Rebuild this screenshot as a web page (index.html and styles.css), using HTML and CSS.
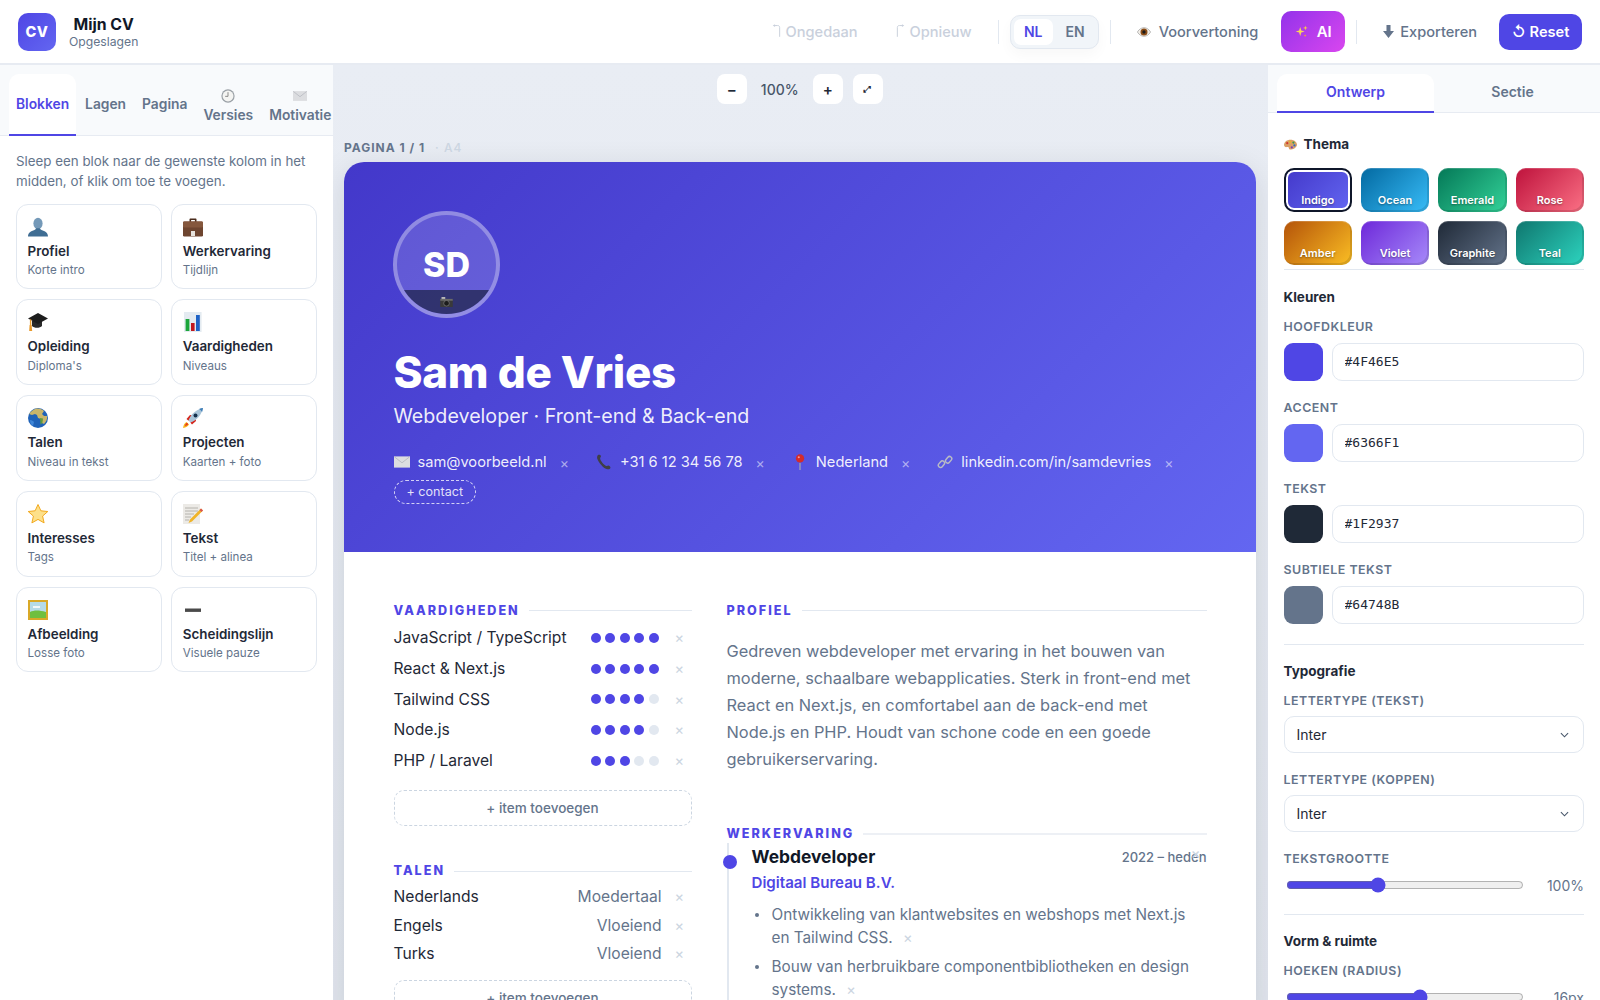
FILE: index.html
```html
<!DOCTYPE html>
<html lang="nl">

<head>
    <meta charset="UTF-8">
    <title>Mijn CV</title>
    <link rel="stylesheet" href="styles.css">
</head>

<body>
    <svg class="sprite" aria-hidden="true">
        <symbol id="i-person" viewBox="0 0 20 20">
            <ellipse cx="10" cy="6.5" rx="4.6" ry="5.8" fill="#7499b8" />
            <path d="M0 19.5c0-4 3-5.4 6.5-6.6 1-.4 1.4-1 1.4-1.6h4.2c0 .6.4 1.2 1.4 1.6 3.5 1.2 6.5 2.6 6.5 6.6z" fill="#3f6d93" />
        </symbol>
        <symbol id="i-case" viewBox="0 0 20 20">
            <path d="M6.5 5V2.4c0-.6.4-1 1-1h5c.6 0 1 .4 1 1V5h-1.6V3h-3.8v2z" fill="#4a2c1c" />
            <rect x="0" y="4.6" width="20" height="15" rx="1.4" fill="#6e4530" />
            <rect x="0" y="4.6" width="20" height="6" rx="1.4" fill="#85573d" />
            <rect x="8" y="14" width="4" height="5" fill="#e8e4de" />
        </symbol>
        <symbol id="i-cap" viewBox="0 0 20 20">
            <path d="M4 9v5c2 2.4 8 2.4 10 0V9z" fill="#2a2a2a" />
            <path d="M10 1 20 6.5 10 12 0 6.5z" fill="#1d1d1d" />
            <path d="M2.6 7.4v6" stroke="#e89a2c" stroke-width="1.4" />
            <path d="M1.6 13h2l.6 6H1.2z" fill="#e89a2c" />
        </symbol>
        <symbol id="i-chart" viewBox="0 0 20 20">
            <rect x="1" y="0" width="17.6" height="20" fill="#e4ebf1" />
            <rect x="2.6" y="7" width="3.8" height="12" fill="#1ca63b" />
            <rect x="8" y="11" width="3.6" height="8" fill="#c2181f" />
            <rect x="13" y="3" width="3.8" height="16" fill="#1e62c6" />
        </symbol>
        <symbol id="i-globe" viewBox="0 0 20 20">
            <circle cx="10" cy="10" r="10" fill="#1f62b8" />
            <path d="M7 1c3-1 7 0 9 2l-2 3 2 2 3 0c.6 3-1 6-3 8l-2-1-1-4-3-1-1-3-2-1-3 1-3-1C2.500 4 4.500 2 7 1z" fill="#c9b56a" />
            <path d="M12 10l3 .6-.6 4.500-1.900 1.400z" fill="#5d9b3d" />
            <path d="M2 12c2 0 3 1 4 2l-1 4c-2-1-3-3-3-6z" fill="#3f86d8" />
        </symbol>
        <symbol id="i-rocket" viewBox="0 0 20 20">
            <path d="M0 20c.5-3 1.500-5 3.500-6l2.500 2.500C5 18.500 3 19.500 0 20z" fill="#f6b21c" />
            <path d="M2 18c.3-1.600 1-2.700 2-3.200l1.200 1.200C4.700 17 3.600 17.700 2 18z" fill="#e8371f" />
            <path d="M3.500 11 7 7l2 .2-3.500 5.500zM9 16.500 13 13l-.2-2-5.500 3.500z" fill="#d4261c" />
            <path d="M5.500 12.500C8 6 13 1.500 20 0c-1.500 7-6 12-12.500 14.500z" fill="#a9c4d8" />
            <path d="M16 .9c1 .5 2.500 2 3.100 3.100.4-1.300.7-2.600.9-4-1.400.2-2.700.5-4 .9z" fill="#3f7fb8" />
            <circle cx="12.500" cy="7.500" r="2" fill="#14304d" />
        </symbol>
        <symbol id="i-star" viewBox="0 0 20 20">
            <path d="M10 .5l2.900 6.300 6.900.7-5.200 4.600 1.500 6.800-6.100-3.500-6.100 3.500 1.500-6.800L.2 7.500l6.900-.7z" fill="#fde08a" stroke="#f2a91e" stroke-width="1" stroke-linejoin="round" />
        </symbol>
        <symbol id="i-note" viewBox="0 0 20 20">
            <rect x="0" y="0" width="17" height="20" fill="#eceae6" />
            <path d="M2 4h13M2 7h13M2 10h9M2 13h6M2 16h4" stroke="#a8a6a0" stroke-width=".8" />
            <path d="M18 4.500l2 2L9 17.500l-3.500 1.500L7 15.500z" fill="#f0b429" />
            <path d="M18 4.500l2 2-1.500 1.500-2-2z" fill="#d9534f" />
        </symbol>
        <symbol id="i-frame" viewBox="0 0 20 20">
            <rect x="0" y="0" width="20" height="20" fill="#d9a928" />
            <rect x="2" y="2" width="16" height="16" fill="#b5dbe8" />
            <path d="M2 12c4-2 9-2 16 0v6H2z" fill="#6fbf3f" />
            <path d="M5 6h7v2H5z" fill="#f3f7f8" />
        </symbol>
        <symbol id="i-minus" viewBox="0 0 20 20">
            <rect x="2" y="8.500" width="16" height="3.400" fill="#4a4a4a" />
        </symbol>
        <symbol id="i-clock" viewBox="0 0 20 20">
            <circle cx="10" cy="10" r="9.500" fill="#9aa0a6" />
            <circle cx="10" cy="10" r="7.800" fill="#f4f4f2" />
            <path d="M10 4.500V10.500H6" fill="none" stroke="#777" stroke-width="1.200" />
        </symbol>
        <symbol id="i-mail" viewBox="0 0 20 16">
            <rect x="0" y="1" width="20" height="14" fill="#dcdde0" />
            <path d="M.5 1.500 10 9l9.500-7.500" fill="none" stroke="#b9bbc2" stroke-width="1.200" />
        </symbol>
        <symbol id="i-phone" viewBox="0 0 20 20">
            <path d="M3 1c1.500-.6 3 .5 3.200 1.500.2 1.200-1.300 2-1 3.500.5 2.800 5 8 7.500 9 1.300.5 2.300-.8 3.500-.4 1 .3 2.300 1.700 1.800 3-.5 1.200-2.300 1.900-3.800 1.400C9.500 18.500 3 10 1.500 5.500 1 3.800 1.800 1.600 3 1z" fill="#3f3f46" />
        </symbol>
        <symbol id="i-pin" viewBox="0 0 20 20">
            <path d="M10 11v9" stroke="#a8a8a8" stroke-width="1.500" />
            <circle cx="10" cy="5.500" r="5.200" fill="#d42b2b" />
            <circle cx="8.500" cy="4" r="1.300" fill="#f19a9a" />
        </symbol>
        <symbol id="i-link" viewBox="0 0 20 20">
            <g fill="none" stroke="#b9bcc4" stroke-width="1.800">
                <rect x="1" y="10" width="9" height="5.500" rx="2.700" transform="rotate(-50 5.500 12.700)" />
                <rect x="10" y="4.500" width="9" height="5.500" rx="2.700" transform="rotate(-50 14.500 7.200)" />
            </g>
        </symbol>
        <symbol id="i-eye" viewBox="0 0 20 14">
            <path d="M.5 7C3.500 2.500 6.500.8 10 .8s6.500 1.700 9.500 6.200c-3 4.500-6 6.200-9.500 6.200S3.500 11.500.5 7z" fill="#f2eee8" stroke="#8c8c8c" stroke-width=".8" />
            <circle cx="10" cy="7" r="5" fill="#8a4c16" />
            <circle cx="10" cy="7" r="2.400" fill="#1a1a1a" />
        </symbol>
        <symbol id="i-spark" viewBox="0 0 20 20">
            <path d="M8 3l1.700 5.300L15 10l-5.300 1.700L8 17l-1.700-5.300L1 10l5.300-1.700z" fill="#f8d65a" />
            <path d="M16 1l.9 2.600 2.600.9-2.600.9-.9 2.600-.9-2.600-2.600-.9 2.600-.9z" fill="#f8c84a" />
            <path d="M15.500 14l.6 1.900 1.900.6-1.900.6-.6 1.900-.6-1.900-1.900-.6 1.900-.6z" fill="#f59e3a" />
        </symbol>
        <symbol id="i-palette" viewBox="0 0 20 20">
            <path d="M10 2.500C4.500 2.500 0 6 0 10.500c0 3 2.500 4 4.500 3.400 1.800-.5 3 .2 3 1.800 0 1.600 1.500 2.300 3.500 2 5-.7 9-3.700 9-7.700 0-4-4.500-7.500-10-7.500z" fill="#d9a066" />
            <circle cx="5" cy="8" r="1.700" fill="#d0342c" />
            <circle cx="9.500" cy="5.800" r="1.700" fill="#e8b923" />
            <circle cx="14.500" cy="7" r="1.700" fill="#3a9a4b" />
            <circle cx="16" cy="11.500" r="1.700" fill="#2f6fc4" />
            <circle cx="12" cy="14.500" r="1.700" fill="#7a3fb0" />
        </symbol>
        <symbol id="i-camera" viewBox="0 0 20 16">
            <rect x="0" y="3" width="20" height="13" rx="1" fill="#3a3a3a" />
            <rect x="2" y="0" width="6" height="3.500" fill="#b8b8b8" />
            <rect x="0" y="3" width="20" height="3" fill="#6a6a6a" />
            <circle cx="10" cy="10" r="4.500" fill="#1c1c1c" stroke="#8a8a8a" />
        </symbol>
        <symbol id="i-undo" viewBox="0 0 10 14">
            <path d="M8.500 14V3.500C8.500 2 7.500 1.500 6 1.500H3" fill="none" stroke="currentColor" stroke-width="1.100" />
            <path d="M3.400 0 .8 1.500l2.600 1.500z" fill="currentColor" />
        </symbol>
        <symbol id="i-redo" viewBox="0 0 10 14">
            <path d="M1.500 14V3.500C1.500 2 2.500 1.500 4 1.500h3" fill="none" stroke="currentColor" stroke-width="1.100" />
            <path d="M6.600 0l2.600 1.500-2.600 1.500z" fill="currentColor" />
        </symbol>
        <symbol id="i-down" viewBox="0 0 12 14">
            <path d="M3.800 0h4.400v6.500H12L6 14 0 6.500h3.800z" fill="currentColor" />
        </symbol>
        <symbol id="i-chev" viewBox="0 0 10 6">
            <path d="M1 1l4 4 4-4" fill="none" stroke="#475569" stroke-width="1.200" />
        </symbol>
    </svg>

    <header class="topbar">
        <div class="brand">
            <div class="logo">CV</div>
            <div class="brand-text">
                <strong>Mijn CV</strong>
                <span>Opgeslagen</span>
            </div>
        </div>
        <div class="actions">
            <button class="btn-ghost disabled undo"><svg class="ico"><use href="#i-undo" /></svg>Ongedaan</button>
            <button class="btn-ghost disabled redo"><svg class="ico"><use href="#i-redo" /></svg>Opnieuw</button>
            <span class="divider"></span>
            <div class="lang">
                <span class="lang-item active">NL</span>
                <span class="lang-item">EN</span>
            </div>
            <span class="divider"></span>
            <button class="btn-ghost preview"><svg class="ico-eye"><use href="#i-eye" /></svg>Voorvertoning</button>
            <button class="btn-ai"><svg class="ico-spark"><use href="#i-spark" /></svg>AI</button>
            <span class="divider"></span>
            <button class="btn-ghost export"><svg class="ico-down"><use href="#i-down" /></svg>Exporteren</button>
            <button class="btn-reset"><span>↺</span>Reset</button>
        </div>
    </header>

    <div class="workspace">
        <aside class="left-panel">
            <nav class="tabs">
                <a class="tab active">Blokken</a>
                <a class="tab">Lagen</a>
                <a class="tab">Pagina</a>
                <a class="tab stacked"><svg class="tab-ico"><use href="#i-clock" /></svg>Versies</a>
                <a class="tab stacked"><svg class="tab-ico"><use href="#i-mail" /></svg>Motivatie</a>
            </nav>
            <div class="left-body">
                <p class="hint">Sleep een blok naar de gewenste kolom in het midden, of klik om toe te voegen.</p>
                <div class="block-grid">
                    <div class="block"><svg class="block-ico"><use href="#i-person" /></svg><b>Profiel</b><small>Korte intro</small></div>
                    <div class="block"><svg class="block-ico"><use href="#i-case" /></svg><b>Werkervaring</b><small>Tijdlijn</small></div>
                    <div class="block"><svg class="block-ico"><use href="#i-cap" /></svg><b>Opleiding</b><small>Diploma's</small></div>
                    <div class="block"><svg class="block-ico"><use href="#i-chart" /></svg><b>Vaardigheden</b><small>Niveaus</small></div>
                    <div class="block"><svg class="block-ico"><use href="#i-globe" /></svg><b>Talen</b><small>Niveau in tekst</small></div>
                    <div class="block"><svg class="block-ico"><use href="#i-rocket" /></svg><b>Projecten</b><small>Kaarten + foto</small></div>
                    <div class="block"><svg class="block-ico"><use href="#i-star" /></svg><b>Interesses</b><small>Tags</small></div>
                    <div class="block"><svg class="block-ico"><use href="#i-note" /></svg><b>Tekst</b><small>Titel + alinea</small></div>
                    <div class="block"><svg class="block-ico"><use href="#i-frame" /></svg><b>Afbeelding</b><small>Losse foto</small></div>
                    <div class="block"><svg class="block-ico"><use href="#i-minus" /></svg><b>Scheidingslijn</b><small>Visuele pauze</small></div>
                </div>
            </div>
        </aside>

        <main class="canvas">
            <div class="zoombar">
                <button class="zoom-btn">−</button>
                <span class="zoom-val">100%</span>
                <button class="zoom-btn">+</button>
                <button class="zoom-btn small">⤢</button>
            </div>
            <div class="page-label">PAGINA 1 / 1 <span>· A4</span></div>
            <article class="paper">
                <section class="cv-head">
                    <div class="avatar">
                        <span class="initials">SD</span>
                        <span class="avatar-cam"><svg><use href="#i-camera" /></svg></span>
                    </div>
                    <h1>Sam de Vries</h1>
                    <p class="role">Webdeveloper · Front-end &amp; Back-end</p>
                    <div class="contacts">
                        <span class="contact"><svg><use href="#i-mail" /></svg>sam@voorbeeld.nl<em>×</em></span>
                        <span class="contact"><svg><use href="#i-phone" /></svg>+31 6 12 34 56 78<em>×</em></span>
                        <span class="contact"><svg><use href="#i-pin" /></svg>Nederland<em>×</em></span>
                        <span class="contact"><svg><use href="#i-link" /></svg>linkedin.com/in/samdevries<em>×</em></span>
                        <span class="add-contact">+ contact</span>
                    </div>
                </section>
                <section class="cv-body">
                    <div class="col-left">
                        <h2 class="sec-title">VAARDIGHEDEN</h2>
                        <ul class="skills">
                            <li><span>JavaScript / TypeScript</span><span class="dots"><i></i><i></i><i></i><i></i><i></i></span><em>×</em></li>
                            <li><span>React &amp; Next.js</span><span class="dots"><i></i><i></i><i></i><i></i><i></i></span><em>×</em></li>
                            <li><span>Tailwind CSS</span><span class="dots"><i></i><i></i><i></i><i></i><i class="off"></i></span><em>×</em></li>
                            <li><span>Node.js</span><span class="dots"><i></i><i></i><i></i><i></i><i class="off"></i></span><em>×</em></li>
                            <li><span>PHP / Laravel</span><span class="dots"><i></i><i></i><i></i><i class="off"></i><i class="off"></i></span><em>×</em></li>
                        </ul>
                        <button class="add-item">+ item toevoegen</button>

                        <h2 class="sec-title talen">TALEN</h2>
                        <ul class="langs">
                            <li><span>Nederlands</span><span class="level">Moedertaal</span><em>×</em></li>
                            <li><span>Engels</span><span class="level">Vloeiend</span><em>×</em></li>
                            <li><span>Turks</span><span class="level">Vloeiend</span><em>×</em></li>
                        </ul>
                        <button class="add-item">+ item toevoegen</button>
                    </div>
                    <div class="col-right">
                        <h2 class="sec-title">PROFIEL</h2>
                        <p class="about">Gedreven webdeveloper met ervaring in het bouwen van moderne, schaalbare webapplicaties. Sterk in front-end met React en Next.js, en comfortabel aan de back-end met Node.js en PHP. Houdt van schone code en een goede gebruikerservaring.</p>

                        <h2 class="sec-title werk">WERKERVARING</h2>
                        <div class="job">
                            <span class="job-dot"></span>
                            <div class="job-top">
                                <h3>Webdeveloper</h3>
                                <span class="job-date">2022 – heden<em>×</em></span>
                            </div>
                            <div class="job-company">Digitaal Bureau B.V.</div>
                            <ul class="job-list">
                                <li>Ontwikkeling van klantwebsites en webshops met Next.js en Tailwind CSS. <em>×</em></li>
                                <li>Bouw van herbruikbare componentbibliotheken en design systems. <em>×</em></li>
                            </ul>
                        </div>
                    </div>
                </section>
            </article>
        </main>

        <aside class="right-panel">
            <nav class="tabs two">
                <a class="tab active">Ontwerp</a>
                <a class="tab">Sectie</a>
            </nav>
            <div class="right-body">
                <h4 class="group-title"><svg class="ico-palette"><use href="#i-palette" /></svg>Thema</h4>
                <div class="themes">
                    <div class="theme indigo selected">Indigo</div>
                    <div class="theme ocean">Ocean</div>
                    <div class="theme emerald">Emerald</div>
                    <div class="theme rose">Rose</div>
                    <div class="theme amber">Amber</div>
                    <div class="theme violet">Violet</div>
                    <div class="theme graphite">Graphite</div>
                    <div class="theme teal">Teal</div>
                </div>
                <hr class="after-themes">
                <h4 class="group-title">Kleuren</h4>
                <label class="field-label">HOOFDKLEUR</label>
                <div class="color-row"><span class="swatch c1"></span><input class="hex" value="#4F46E5"></div>
                <label class="field-label">ACCENT</label>
                <div class="color-row"><span class="swatch c2"></span><input class="hex" value="#6366F1"></div>
                <label class="field-label">TEKST</label>
                <div class="color-row"><span class="swatch c3"></span><input class="hex" value="#1F2937"></div>
                <label class="field-label">SUBTIELE TEKST</label>
                <div class="color-row"><span class="swatch c4"></span><input class="hex" value="#64748B"></div>
                <hr class="after-colors">
                <h4 class="group-title">Typografie</h4>
                <label class="field-label">LETTERTYPE (TEKST)</label>
                <div class="select"><span>Inter</span><svg><use href="#i-chev" /></svg></div>
                <label class="field-label">LETTERTYPE (KOPPEN)</label>
                <div class="select"><span>Inter</span><svg><use href="#i-chev" /></svg></div>
                <label class="field-label">TEKSTGROOTTE</label>
                <div class="range-row"><input type="range" min="0" max="100" value="38"><span>100%</span></div>
                <hr>
                <h4 class="group-title">Vorm &amp; ruimte</h4>
                <label class="field-label">HOEKEN (RADIUS)</label>
                <div class="range-row"><input type="range" min="0" max="100" value="57"><span>16px</span></div>
            </div>
        </aside>
    </div>
</body>

</html>
```

FILE: styles.css
```css
* {
    box-sizing: border-box;
}

html,
body {
    margin: 0;
    height: 100%;
    overflow: hidden;
}

body {
    font-family: Inter, "Liberation Sans", sans-serif;
    color: #1f2937;
    background: #e8ecf3;
}

button {
    font-family: inherit;
    border: none;
    background: none;
    padding: 0;
}

i,
em {
    font-style: normal;
}

.sprite {
    position: absolute;
    width: 0;
    height: 0;
}

/* top bar */
.topbar {
    height: 65px;
    background: #fff;
    border-bottom: 2px solid #e7ebf2;
    display: flex;
    align-items: center;
    justify-content: space-between;
    padding: 0 18px;
}

.brand {
    display: flex;
    align-items: center;
    gap: 13px;
}

.logo {
    width: 38px;
    height: 38px;
    border-radius: 10px;
    background: linear-gradient(135deg, #4f46e5, #6366f1);
    color: #fff;
    font-weight: 800;
    font-size: 14.5px;
    letter-spacing: 0.5px;
    display: flex;
    align-items: center;
    justify-content: center;
}

.brand-text {
    display: flex;
    flex-direction: column;
    align-items: center;
}

.brand-text strong {
    font-size: 15.8px;
    font-weight: 700;
    line-height: 19px;
    color: #111827;
}

.brand-text span {
    font-size: 12.2px;
    line-height: 15px;
    color: #64748b;
}

.actions {
    display: flex;
    align-items: center;
}

.btn-ghost {
    font-size: 14.6px;
    font-weight: 500;
    color: #64748b;
    display: flex;
    align-items: center;
}

.btn-ghost.disabled {
    color: #c9d0dc;
}

.ico {
    width: 9px;
    height: 13px;
    margin-right: 5px;
    margin-top: -2px;
}

.undo {
    margin-right: 38px;
}

.redo {
    margin-right: 26px;
}

.divider {
    width: 1px;
    height: 24px;
    background: #e2e8f0;
}

.lang {
    margin: 0 11px;
    width: 89px;
    height: 34px;
    background: #f1f5f9;
    border: 1px solid #e2e8f0;
    border-radius: 10px;
    padding: 3px;
    display: flex;
    gap: 3px;
    box-shadow: 0 6px 14px rgba(15, 23, 42, 0.03);
}

.lang-item {
    width: 40px;
    font-size: 14px;
    font-weight: 600;
    color: #64748b;
    display: flex;
    align-items: center;
    justify-content: center;
    border-radius: 7px;
}

.lang-item.active {
    background: #fff;
    color: #4f46e5;
}

.preview {
    margin-left: 26px;
    margin-right: 23px;
    gap: 8px;
}

.ico-eye {
    width: 14px;
    height: 10px;
}

.btn-ai {
    width: 64px;
    height: 41px;
    border-radius: 10px;
    background: linear-gradient(135deg, #9333ea, #d946ef);
    color: #fff;
    font-size: 15px;
    font-weight: 600;
    display: flex;
    align-items: center;
    justify-content: center;
    gap: 9px;
    margin-right: 11px;
}

.ico-spark {
    width: 13px;
    height: 13px;
}

.export {
    margin-left: 26px;
    margin-right: 22px;
    gap: 6px;
}

.ico-down {
    width: 11px;
    height: 13px;
}

.btn-reset {
    width: 83px;
    height: 36px;
    border-radius: 10px;
    background: #4f46e5;
    color: #fff;
    font-size: 14.6px;
    font-weight: 600;
    display: flex;
    align-items: center;
    justify-content: center;
    gap: 4px;
}

/* three columns */
.workspace {
    display: flex;
    height: calc(100vh - 65px);
}

.left-panel {
    width: 333px;
    flex-shrink: 0;
    background: #fff;
    overflow: hidden;
}

.right-panel {
    width: 332px;
    flex-shrink: 0;
    background: #fff;
    overflow: hidden;
}

.tabs {
    display: flex;
    gap: 2px;
    background: #f8fafc;
    border-bottom: 1px solid #e7ebf2;
    padding: 8.5px 0 0 9px;
    height: 71px;
    white-space: nowrap;
}

.tab {
    padding: 0 7px;
    font-size: 13.8px;
    font-weight: 600;
    color: #64748b;
    display: flex;
    align-items: center;
    justify-content: center;
    border-bottom: 2px solid transparent;
    margin-bottom: -1px;
    border-radius: 10px 10px 0 0;
}

.tab.active {
    background: #fff;
    color: #4f46e5;
    border-bottom-color: #4f46e5;
}

.tab.stacked {
    flex-direction: column;
    padding-top: 5px;
    gap: 4px;
}

.tab-ico {
    width: 14px;
    height: 14px;
}

.tabs.two {
    gap: 0;
    height: 47.5px;
    padding-right: 9px;
}

.tabs.two .tab {
    flex: 1;
    font-size: 14px;
    padding-bottom: 2px;
}

.left-body {
    padding: 15px 16px;
}

.hint {
    margin: 0 0 12.8px;
    font-size: 13.33px;
    line-height: 20px;
    color: #64748b;
}

.block-grid {
    display: grid;
    grid-template-columns: 1fr 1fr;
    gap: 10px 9.5px;
}

.block {
    height: 85.7px;
    border: 1px solid #e2e8f0;
    border-radius: 12px;
    padding: 12px 10.5px 0;
    display: flex;
    flex-direction: column;
}

.block-ico {
    width: 20px;
    height: 20px;
    flex-shrink: 0;
}

.block b {
    font-size: 13.4px;
    font-weight: 600;
    line-height: 20px;
    margin-top: 4px;
    color: #1f2937;
}

.block small {
    font-size: 11.6px;
    line-height: 18px;
    color: #64748b;
    padding-top: 0.5px;
}

/* canvas */
.canvas {
    flex: 1;
    min-width: 0;
    padding: 9px 12.5px 0 11px;
    overflow: hidden;
    background: linear-gradient(#e9edf4, #e2e6ee);
}

.zoombar {
    display: flex;
    align-items: center;
    justify-content: center;
    height: 30px;
    gap: 10px;
}

.zoom-btn {
    width: 30px;
    height: 30px;
    border-radius: 8px;
    background: #fff;
    font-size: 15px;
    font-weight: 600;
    color: #1f2937;
}

.zoom-btn.small {
    font-size: 9px;
}

.zoom-val {
    width: 46px;
    text-align: center;
    font-size: 14px;
    font-weight: 500;
    color: #475569;
}

.page-label {
    margin-top: 34px;
    height: 24px;
    font-size: 12px;
    font-weight: 700;
    letter-spacing: 1px;
    color: #64748b;
    line-height: 19px;
}

.page-label span {
    margin-left: 6px;
    color: #cbd5e1;
    font-weight: 500;
}

.paper {
    background: #fff;
    border-radius: 20px 20px 0 0;
    box-shadow: 0 8px 32px rgba(15, 23, 42, 0.12);
}

.cv-head {
    height: 390px;
    border-radius: 20px 20px 0 0;
    background: linear-gradient(135deg, #4338ca, #6366f1);
    padding: 49px 49.500px 0;
    color: #fff;
}

.avatar {
    position: relative;
    width: 107px;
    height: 107px;
    margin-left: -0.5px;
    border-radius: 50%;
    border: 4px solid rgba(255, 255, 255, 0.3);
    background: rgba(255, 255, 255, 0.15);
    overflow: hidden;
    display: flex;
    align-items: center;
    justify-content: center;
}

.initials {
    font-size: 34px;
    font-weight: 800;
}

.avatar-cam {
    position: absolute;
    left: 0;
    right: 0;
    bottom: 0;
    height: 24px;
    background: rgba(15, 23, 42, 0.6);
    display: flex;
    align-items: center;
    justify-content: center;
}

.avatar-cam svg {
    width: 13px;
    height: 10px;
}

.cv-head h1 {
    margin: 27px 0 0;
    font-size: 44px;
    line-height: 54px;
    font-weight: 800;
    letter-spacing: -0.3px;
}

.role {
    margin: 1.5px 0 0;
    font-size: 19.66px;
    line-height: 30px;
    color: rgba(255, 255, 255, 0.92);
}

.contacts {
    margin-top: 22.5px;
    display: flex;
    flex-wrap: wrap;
    align-items: center;
    row-gap: 9px;
    font-size: 14.65px;
    color: rgba(255, 255, 255, 0.92);
}

.contact {
    display: flex;
    align-items: center;
    margin-right: 27px;
}

.contact svg {
    width: 16px;
    height: 16px;
    margin-right: 8px;
    flex-shrink: 0;
}

.contact em {
    margin-left: 13px;
    font-size: 14px;
    color: rgba(255, 255, 255, 0.55);
}

.add-contact {
    border: 1px dashed rgba(255, 255, 255, 0.75);
    border-radius: 12px;
    padding: 0 12px;
    height: 24px;
    line-height: 22px;
    font-size: 12.6px;
    color: rgba(255, 255, 255, 0.85);
}

.cv-body {
    display: grid;
    grid-template-columns: 298px 480px;
    gap: 35px;
    padding: 49.500px 49.500px 0;
}

.sec-title {
    margin: 0;
    font-size: 12.6px;
    line-height: 18px;
    font-weight: 800;
    letter-spacing: 2px;
    color: #4f46e5;
    display: flex;
    align-items: center;
    gap: 9px;
}

.sec-title::after {
    content: "";
    flex: 1;
    height: 1px;
    background: #e2e8f0;
}

.skills,
.langs,
.job-list {
    list-style: none;
    margin: 0;
    padding: 0;
}

.skills {
    margin-top: 3px;
}

.skills li {
    height: 30.7px;
    display: flex;
    align-items: center;
    font-size: 15.63px;
    color: #1f2937;
}

.skills li span:first-child {
    width: 197px;
}

.dots {
    display: flex;
    gap: 4.5px;
    width: 84px;
}

.dots i {
    width: 10px;
    height: 10px;
    border-radius: 50%;
    background: #4f46e5;
}

.dots i.off {
    background: #e2e8f0;
}

.col-left em,
.job-list em,
.job-date em {
    color: #cbd5e1;
    font-size: 14.5px;
}

.add-item {
    display: block;
    width: 100%;
    height: 36px;
    margin-top: 14px;
    border: 1px dashed #cbd5e1;
    border-radius: 10px;
    font-size: 13.5px;
    font-weight: 500;
    color: #64748b;
}

.sec-title.talen {
    margin-top: 36.5px;
}

.langs {
    margin-top: 2px;
}

.langs li {
    height: 28.6px;
    display: flex;
    align-items: center;
    font-size: 15.63px;
}

.level {
    margin-left: auto;
    margin-right: 13px;
    color: #64748b;
}

.langs em {
    width: 17px;
}

.langs+.add-item {
    margin-top: 12px;
}

.about {
    margin: 18.5px 0 0;
    font-size: 16.38px;
    line-height: 26.9px;
    color: #64748b;
}

.sec-title.werk {
    margin-top: 52px;
}

.sec-title.werk::after {
    height: 2px;
    background: #edf0f5;
}

.job {
    position: relative;
    padding-left: 23px;
    border-left: 2px solid #e2e8f0;
}

.job-dot {
    position: absolute;
    left: -5.5px;
    top: 12px;
    width: 14px;
    height: 14px;
    border-radius: 50%;
    background: #4f46e5;
}

.job-top {
    display: flex;
    justify-content: space-between;
    align-items: center;
    padding-top: 1px;
}

.job-top h3 {
    margin: 0;
    font-size: 17.4px;
    line-height: 26px;
    font-weight: 700;
    color: #111827;
}

.job-date {
    position: relative;
    font-size: 13px;
    font-weight: 500;
    color: #64748b;
}

.job-date em {
    position: absolute;
    right: 6px;
    top: -4px;
}

.job-company {
    font-size: 15.1px;
    font-weight: 600;
    line-height: 22px;
    color: #4f46e5;
    margin-top: 2px;
}

.job-list {
    margin-top: 9px;
}

.job-list li {
    position: relative;
    padding-left: 20px;
    font-size: 15.3px;
    line-height: 23.4px;
    color: #64748b;
    margin-bottom: 5.5px;
}

.job-list li::before {
    content: "";
    position: absolute;
    left: 3px;
    top: 10px;
    width: 4px;
    height: 4px;
    border-radius: 50%;
    background: #64748b;
}

.job-list em {
    margin-left: 6px;
}

/* right panel */
.right-body {
    padding: 21.5px 16px 0 15.5px;
}

.group-title {
    margin: 0;
    font-size: 13.5px;
    line-height: 20px;
    font-weight: 700;
    color: #1f2937;
    display: flex;
    align-items: center;
}

.ico-palette {
    width: 13px;
    height: 13px;
    margin-right: 7px;
}

.themes {
    margin-top: 13.7px;
    display: grid;
    grid-template-columns: repeat(4, 1fr);
    gap: 9.3px 9px;
}

.theme {
    height: 44px;
    border-radius: 10px;
    color: #fff;
    font-size: 11px;
    font-weight: 600;
    text-shadow: 0 1px 2px rgba(0, 0, 0, 0.4);
    display: flex;
    align-items: flex-end;
    justify-content: center;
    padding-bottom: 5px;
    box-shadow: inset -2px -2px 0 rgba(0, 0, 0, 0.12), inset 0 1px 0 rgba(255, 255, 255, 0.18);
}

.indigo { background: linear-gradient(135deg, #4338ca, #6366f1); }
.ocean { background: linear-gradient(135deg, #0369a1, #38bdf8); }
.emerald { background: linear-gradient(135deg, #047857, #34d399); }
.rose { background: linear-gradient(135deg, #be123c, #fb7185); }
.amber { background: linear-gradient(135deg, #b45309, #fbbf24); }
.violet { background: linear-gradient(135deg, #6d28d9, #a78bfa); }
.graphite { background: linear-gradient(135deg, #1f2937, #64748b); }
.teal { background: linear-gradient(135deg, #0f766e, #2dd4bf); }

.theme.selected {
    border: 2px solid #0f172a;
    box-shadow: inset 0 0 0 2px #fff;
    padding-bottom: 3px;
}

hr {
    border: none;
    height: 1px;
    background: #e2e8f0;
    margin: 20px 0 16.5px;
}

hr.after-themes {
    margin: 4.5px 0 16.7px;
}

.field-label {
    display: block;
    margin-top: 11px;
    font-size: 12.4px;
    line-height: 18px;
    font-weight: 600;
    letter-spacing: 0.5px;
    color: #64748b;
}

.color-row {
    display: flex;
    gap: 9px;
    margin: 6.6px 0 18.4px;
}

.swatch {
    width: 39px;
    height: 38px;
    border-radius: 9px;
    flex-shrink: 0;
}

.c1 { background: #4f46e5; }
.c2 { background: #6366f1; }
.c3 { background: #1f2937; }
.c4 { background: #64748b; }

.hex {
    flex: 1;
    min-width: 0;
    height: 38px;
    border: 1px solid #e2e8f0;
    border-radius: 10px;
    padding: 0 12px;
    font-family: "DejaVu Sans Mono", monospace;
    font-size: 13px;
    color: #1f2937;
}

hr.after-colors {
    margin: 20px 0 16.7px;
}

.select {
    height: 37.5px;
    margin: 5.5px 0 18px;
    border: 1px solid #e2e8f0;
    border-radius: 10px;
    padding: 0 14px 0 12px;
    background: #fff;
    font-size: 14px;
    color: #1f2937;
    display: flex;
    align-items: center;
    justify-content: space-between;
}

.select svg {
    width: 9px;
    height: 6px;
}

.range-row {
    display: flex;
    align-items: center;
    justify-content: space-between;
    margin: 8.3px 0 0;
    font-size: 14px;
    color: #64748b;
}

.range-row input {
    width: 238px;
    margin: 0 0 0 2px;
    accent-color: #4f46e5;
}
```
